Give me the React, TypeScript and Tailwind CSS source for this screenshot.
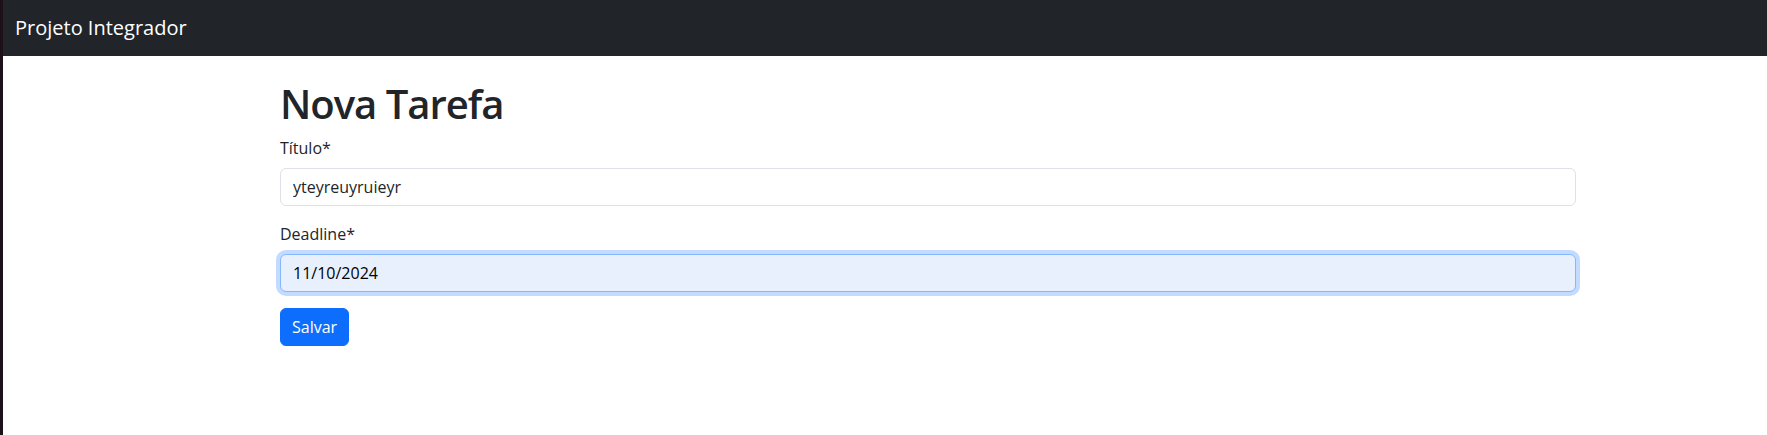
import React from 'react';

const font = { fontFamily: '"Open Sans", "Noto Sans", sans-serif' };

export default function App() {
  return (
    <div className="flex min-h-[435px] bg-white text-[#212529]" style={font}>
      {/* left edge strip */}
      <div className="w-[3px] shrink-0 bg-[#1c1118]" />

      <div className="flex-1">
        {/* Navbar */}
        <nav className="h-[56px] bg-[#212529] flex items-center px-3">
          <span className="text-[20px] leading-[30px] text-white">Projeto Integrador</span>
        </nav>

        {/* Form */}
        <div className="ml-[265px] w-[1320px] px-3 pt-6">
          <h1 className="text-[40px] leading-[48px] font-semibold tracking-[-1px] mb-2">Nova Tarefa</h1>

          <div className="mb-4">
            <label className="block text-[16px] leading-6 mb-2">Título*</label>
            <input
              type="text"
              defaultValue="yteyreuyruieyr"
              className="block w-full h-[38px] px-3 text-[16px] leading-6 border border-[#dee2e6] rounded-[6px] bg-white text-[#212529] outline-none"
            />
          </div>

          <div className="mb-4">
            <label className="block text-[16px] leading-6 mb-2">Deadline*</label>
            <input
              type="text"
              defaultValue="11/10/2024"
              className="block w-full h-[38px] px-3 text-[16px] leading-6 border border-[#86b7fe] rounded-[6px] bg-[#e8f0fe] text-black outline-none shadow-[0_0_0_4px_rgba(13,110,253,0.25)]"
            />
          </div>

          <button className="h-[38px] px-[11px] text-[16px] leading-6 text-white bg-[#0d6efd] border border-[#0d6efd] rounded-[6px]">
            Salvar
          </button>
        </div>
      </div>
    </div>
  );
}
